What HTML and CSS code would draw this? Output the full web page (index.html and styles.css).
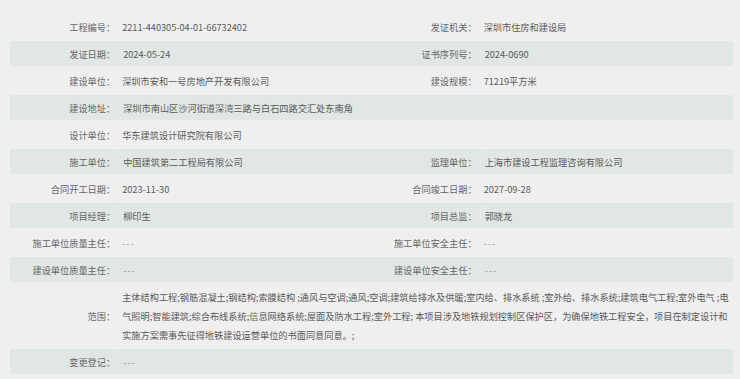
FILE: index.html
```html
<!DOCTYPE html>
<html lang="zh-CN">
<head>
<meta charset="utf-8">
<title>施工许可信息</title>
<link rel="stylesheet" href="styles.css">
</head>
<body>
<div class="page">
<table class="info">
  <colgroup><col class="c-label"><col class="c-value"><col class="c-label"><col class="c-value"></colgroup>
  <tr><td class="lbl">工程编号：</td><td class="val">2211-440305-04-01-66732402</td><td class="lbl">发证机关：</td><td class="val">深圳市住房和建设局</td></tr>
  <tr class="band"><td class="lbl">发证日期：</td><td class="val">2024-05-24</td><td class="lbl">证书序列号：</td><td class="val">2024-0690</td></tr>
  <tr><td class="lbl">建设单位：</td><td class="val">深圳市安和一号房地产开发有限公司</td><td class="lbl">建设规模：</td><td class="val">71219平方米</td></tr>
  <tr class="band"><td class="lbl">建设地址：</td><td class="val" colspan="3">深圳市南山区沙河街道深湾三路与白石四路交汇处东南角</td></tr>
  <tr><td class="lbl">设计单位：</td><td class="val" colspan="3">华东建筑设计研究院有限公司</td></tr>
  <tr class="band"><td class="lbl">施工单位：</td><td class="val">中国建筑第二工程局有限公司</td><td class="lbl">监理单位：</td><td class="val">上海市建设工程监理咨询有限公司</td></tr>
  <tr><td class="lbl">合同开工日期：</td><td class="val">2023-11-30</td><td class="lbl">合同竣工日期：</td><td class="val">2027-09-28</td></tr>
  <tr class="band"><td class="lbl">项目经理：</td><td class="val">柳印生</td><td class="lbl">项目总监：</td><td class="val">郭晓龙</td></tr>
  <tr><td class="lbl">施工单位质量主任：</td><td class="val dash">---</td><td class="lbl">施工单位安全主任：</td><td class="val dash">---</td></tr>
  <tr class="band"><td class="lbl">建设单位质量主任：</td><td class="val dash">---</td><td class="lbl">建设单位安全主任：</td><td class="val dash">---</td></tr>
  <tr class="tall"><td class="lbl">范围：</td><td class="val scope" colspan="3">主体结构工程;钢筋混凝土;钢结构;索膜结构 ;通风与空调;通风;空调;建筑给排水及供暖;室内给、排水系统 ;室外给、排水系统;建筑电气工程;室外电气 ;电气照明;智能建筑;综合布线系统;信息网络系统;屋面及防水工程;室外工程; 本项目涉及地铁规划控制区保护区，为确保地铁工程安全，项目在制定设计和实施方案需事先征得地铁建设运营单位的书面同意同意。;</td></tr>
  <tr class="band"><td class="lbl">变更登记：</td><td class="val dash" colspan="3">---</td></tr>
</table>
</div>
</body>
</html>
```
FILE: styles.css
```css
html, body {
  margin: 0;
  padding: 0;
  background: #efefef;
}
.page {
  padding: 12px 7px 0 10px;
  font-family: "Noto Sans CJK SC", "Microsoft YaHei", sans-serif;
  font-size: 9.2px;
  color: #5a5a5a;
}
.info {
  width: 723px;
  border-collapse: separate;
  border-spacing: 0 2px;
  table-layout: fixed;
}
.c-label { width: 108px; }
.c-value { width: 253px; }
.info td {
  height: 25px;
  padding: 0;
  vertical-align: middle;
  white-space: nowrap;
}
.info .lbl {
  text-align: right;
  padding-right: 3px;
  color: #666;
}
.info .val {
  padding-left: 4px;
}
.band td {
  background: #e1e7e4;
}
.band .val {
  border-left: 1px solid #e6ebe8;
}
.dash {
  color: #999;
  letter-spacing: 1px;
}
.info .scope {
  white-space: normal;
  line-height: 19px;
  padding: 4px 0 2px 4px;
  height: auto;
}
```
